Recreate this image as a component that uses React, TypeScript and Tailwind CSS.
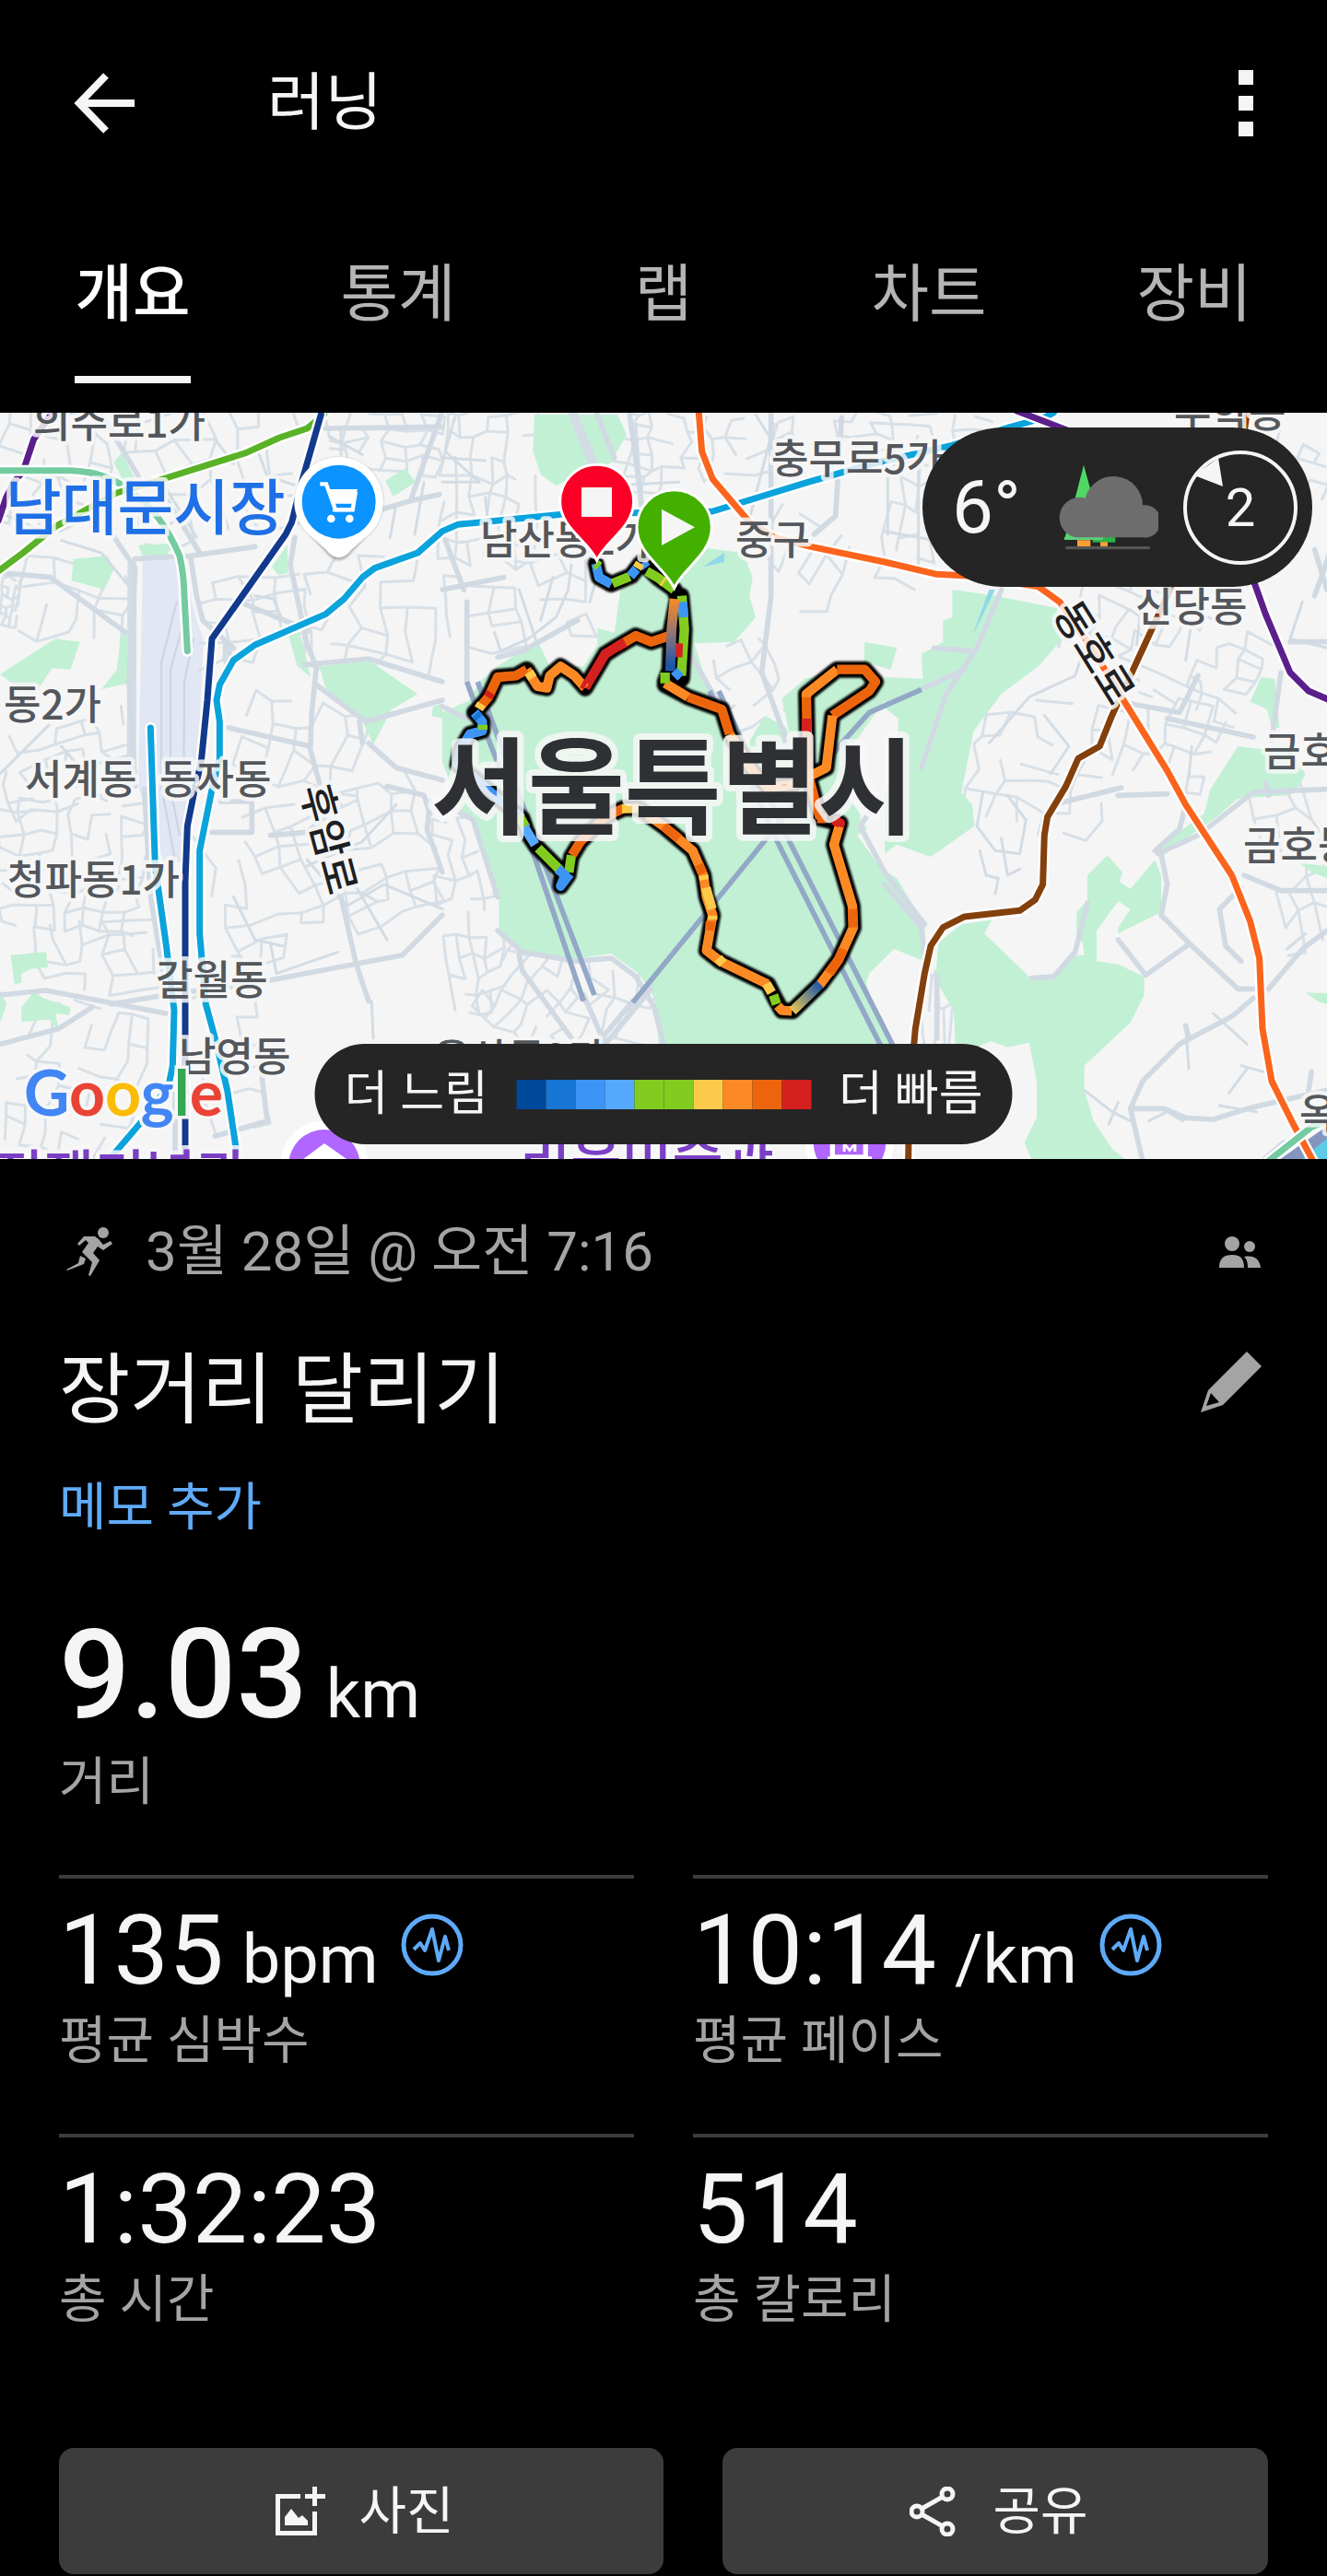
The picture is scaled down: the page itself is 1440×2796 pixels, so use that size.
import React from "react";

const KR = "font-[Roboto,'Noto_Sans_CJK_KR',sans-serif]";

/* ---------- street map data (units are thirds of a pixel) ---------- */

type Cluster = { x: number; y: number; w: number; h: number; rot: number; nx: number; ny: number; seed: number };

const clusters: Cluster[] = [
  { x: 0, y: 20, w: 420, h: 380, rot: 8, nx: 6, ny: 5, seed: 3 },
  { x: 430, y: 20, w: 540, h: 400, rot: -12, nx: 6, ny: 5, seed: 4 },
  { x: 1060, y: 30, w: 380, h: 180, rot: 4, nx: 6, ny: 4, seed: 5 },
  { x: 0, y: 560, w: 60, h: 160, rot: 8, nx: 3, ny: 5, seed: 6 },
  { x: 60, y: 520, w: 350, h: 240, rot: 6, nx: 4, ny: 3, seed: 7 },
  { x: 0, y: 1040, w: 420, h: 260, rot: -14, nx: 6, ny: 5, seed: 8 },
  { x: 640, y: 560, w: 360, h: 260, rot: -8, nx: 4, ny: 4, seed: 9 },
  { x: 980, y: 500, w: 440, h: 380, rot: 5, nx: 5, ny: 5, seed: 10 },
  { x: 780, y: 970, w: 400, h: 260, rot: 12, nx: 5, ny: 3, seed: 11 },
  { x: 0, y: 1280, w: 460, h: 420, rot: 3, nx: 8, ny: 7, seed: 12 },
  { x: 120, y: 1680, w: 380, h: 230, rot: -6, nx: 5, ny: 4, seed: 13 },
  { x: 60, y: 1960, w: 380, h: 480, rot: 14, nx: 6, ny: 7, seed: 14 },
  { x: 700, y: 1280, w: 700, h: 460, rot: -18, nx: 9, ny: 7, seed: 15 },
  { x: 660, y: 1820, w: 180, h: 520, rot: -8, nx: 3, ny: 6, seed: 16 },
  { x: 1440, y: 30, w: 300, h: 480, rot: 3, nx: 6, ny: 7, seed: 17 },
  { x: 1990, y: 30, w: 300, h: 260, rot: 5, nx: 5, ny: 6, seed: 18 },
  { x: 2300, y: 50, w: 300, h: 170, rot: -4, nx: 4, ny: 3, seed: 19 },
  { x: 2720, y: 30, w: 500, h: 160, rot: 4, nx: 8, ny: 4, seed: 20 },
  { x: 1440, y: 520, w: 480, h: 260, rot: -7, nx: 6, ny: 4, seed: 21 },
  { x: 2480, y: 390, w: 260, h: 240, rot: 28, nx: 4, ny: 3, seed: 22 },
  { x: 2300, y: 790, w: 240, h: 240, rot: -30, nx: 4, ny: 4, seed: 23 },
  { x: 2880, y: 160, w: 160, h: 420, rot: 6, nx: 3, ny: 5, seed: 24 },
  { x: 3480, y: 630, w: 620, h: 300, rot: 24, nx: 9, ny: 6, seed: 25 },
  { x: 3180, y: 960, w: 420, h: 420, rot: 12, nx: 5, ny: 6, seed: 26 },
  { x: 3660, y: 960, w: 300, h: 280, rot: 18, nx: 5, ny: 4, seed: 27 },
  { x: 4120, y: 1240, w: 200, h: 520, rot: -16, nx: 3, ny: 5, seed: 28 },
  { x: 4000, y: 100, w: 320, h: 200, rot: 22, nx: 5, ny: 4, seed: 29 },
  { x: 1440, y: 1340, w: 180, h: 640, rot: -6, nx: 4, ny: 10, seed: 30 },
  { x: 1580, y: 1780, w: 340, h: 300, rot: 34, nx: 6, ny: 5, seed: 31 },
  { x: 1900, y: 1830, w: 220, h: 250, rot: 14, nx: 3, ny: 3, seed: 32 },
  { x: 3000, y: 1860, w: 100, h: 230, rot: 2, nx: 4, ny: 2, seed: 33 },
];

function streets({ x, y, w, h, nx, ny, rot, seed }: Cluster): string {
  let s = seed * 7919 + 17;
  const rnd = () => {
    s = (s * 1103515245 + 12345) % 2147483648;
    return s / 2147483648;
  };
  const a = (rot * Math.PI) / 180;
  const pts: number[][][] = [];
  for (let j = 0; j <= ny; j++) {
    pts.push([]);
    for (let i = 0; i <= nx; i++) {
      const u = (i / nx - 0.5) * w + (rnd() - 0.5) * (w / nx) * 0.6;
      const v = (j / ny - 0.5) * h + (rnd() - 0.5) * (h / ny) * 0.6;
      pts[j].push([
        Math.round(x + w / 2 + u * Math.cos(a) - v * Math.sin(a)),
        Math.round(y + h / 2 + u * Math.sin(a) + v * Math.cos(a)),
      ]);
    }
  }
  let d = "";
  for (let j = 0; j <= ny; j++) {
    for (let i = 0; i <= nx; i++) {
      const [px, py] = pts[j][i];
      if (i < nx && rnd() < 0.62) d += `M${px} ${py}L${pts[j][i + 1][0]} ${pts[j][i + 1][1]}`;
      if (j < ny && rnd() < 0.62) d += `M${px} ${py}L${pts[j + 1][i][0]} ${pts[j + 1][i][1]}`;
    }
  }
  return d;
}

const parks = [
  "M370 185 395 155 440 240 410 262Z",
  "M240 500 350 490 370 535 340 600 232 570Z",
  "M0 875 180 760 260 770 230 860 170 855 110 945 60 920Z",
  "M395 740H415V905L330 925 380 860Z",
  "M450 455 555 450 545 490H465Z",
  "M885 525 935 455 938 545 905 552Z",
  "M1255 245 1320 205 1352 250 1280 297Z",
  "M940 750 975 738 1012 885 968 850Z",
  "M1040 850 1200 830 1360 940 1275 990 1215 1105 1180 1030 1060 920Z",
  "M1410 980 1440 970V1020L1405 1010Z",
  "M35 1790 150 1780 156 1830 100 1835 70 1850V1880L47 1885Z",
  "M70 1960 110 1910 140 1930 230 1960 225 1985 180 1980 192 2036 160 2000 70 2007Z",
  "M0 1905 22 1950 0 2010Z",
  "M1740 30H2010L2040 95 1985 190 1940 205 1810 262 1760 225 1735 150Z",
  "M1750 765 1790 850 1900 850 1945 780V725L2000 740 2020 600 2150 470 2260 460 2420 480 2450 560 2440 620 2460 690 2390 770 2260 775 2300 900 2360 990 2430 1110 2490 1010 2560 1050 2580 1110 2545 955 2620 890 2760 850 2880 900 2880 960 2760 1130 2750 1260 2800 1330 2850 1360 2790 1400 2870 1510 2920 1540 2980 1640 3010 1690V1810L2910 1770 2830 1850 2820 1880 2850 1980 2910 2110H2145V2080L2130 1930 2080 1850 1990 1785 1850 1805 1690 1770 1625 1710V1590L1545 1370 1500 1320 1440 1160V1000L1530 960 1560 900 1620 850Z",
  "M3100 600 3240 620 3440 660 3455 765 3380 850 3260 940 3170 1060 3130 1260 3165 1300 3172 1370 3030 1470 2920 1430 2880 1460V1260L2920 1180 2925 1020 2880 985V885L3005 890 3000 810 3070 770V700L3100 690Z",
  "M2815 770 2920 790 2900 860 2812 835Z",
  "M4105 885 4150 890 4165 1050H4140L4125 990 4070 965Z",
  "M4030 1110 4110 1120 4190 1100 4250 1200 4230 1240 4190 1270 4030 1280 3960 1340 3780 1470 3760 1445 3920 1330 3940 1250Z",
  "M3605 1465 3655 1520 3645 1550 3680 1575 3760 1480 3780 1530V1650L3640 1720V1700L3680 1640 3640 1615 3570 1710V1810L3640 1820 3725 1860V1920L3680 2010 3530 2150V2230L3560 2330 3620 2420 3670 2460H3360L3335 2400 3375 2320V2200L3350 2075 3280 2090 3225 2070 3180 2090 3110 2080 3105 1970 3045 1870 3055 1750 3130 1690 3230 1675 3205 1720 3350 1860 3430 1855 3480 1790H3530L3525 1750 3505 1730V1650L3540 1610V1530Z",
  "M4250 1912 4320 1915V1950L4290 1940Z",
  "M4230 1490 4320 1500V1540L4270 1520Z",
];

const minor = [
  "M0 350 140 410M200 440 330 480 420 590M540 270 640 430M840 150 870 230 960 260M830 620 890 630 920 700M700 110 760 190",
  "M1070 100 1180 160M1110 80V160M1380 250 1350 420M1290 320 1270 430M0 1200 160 1040M200 1110 260 1180 420 1140",
  "M1480 40 1450 150 1560 250M1580 300 1600 480M2070 60 2090 330M2520 60 2440 370M2460 30 2510 110",
  "M1860 520 1850 600 1810 690 1720 760 1630 800 1610 740M1690 600 1750 780M1800 560 1760 700M1940 570 1920 640",
  "M2000 340 2280 330M2010 260 2210 250M1440 250 1560 250M1440 170 1580 180",
  "M3560 700 3500 880 3350 950 3220 1100M3720 620 3700 780M3880 700 3860 830M3400 1010 3480 1110 3420 1200",
  "M2890 150V420M2990 180V540M2880 410 3100 450M4240 640 4200 760 4320 790M3880 1110 3870 1210",
  "M3200 1260 3180 1370 3240 1450 3320 1460 3340 1350 3280 1270M3260 1410 3280 1530 3320 1510M3190 1450 3210 1530 3250 1540 3240 1590",
  "M3950 1980 4060 2080M3870 2160 3860 2020M4040 2150 4150 2180M4000 2240 4060 2160M4190 1770 4250 1720",
  "M3530 2230 3620 2300 3680 2330M3610 2340 3640 2270M3740 2330 3800 2300 3850 2330M3970 2280 4090 2300",
  "M880 1750 900 1850 1100 1780M760 1600 830 1740 920 1760M1210 1940 1215 2060",
  "M1000 1480 1130 1630 1250 1560 1440 1640M1120 1500 1260 1740M1290 1300 1180 1420 1000 1500",
];

const major = [
  "M0 545 165 560 410 740M345 390 440 530 420 900 440 1240M440 500 620 490 830 460M620 490 640 620 660 700 760 790",
  "M330 30 450 230M520 270 650 480M960 430 945 520 1000 780 1030 850 1015 1000 1010 1120 1040 1230",
  "M745 1050 1010 1110M1030 910 1190 1030 1440 960M1200 1100 1290 1180 1440 1220M1170 1030 1180 1100",
  "M990 845 1200 825 1440 900M1440 20 1340 300M1060 75 1440 70M1430 290 1340 310 1240 340M780 640 1000 730",
  "M470 1250 490 1600 540 1900M0 1920 150 1905 540 1980M360 1950 540 1920 890 1870 1310 1790 1440 1660",
  "M1110 1600 1160 1820 1200 1940M1400 1290 1390 1380 1440 1520M880 1400 1000 1390 1080 1320M1260 1240 1380 1270 1400 1330",
  "M0 2080 190 2030 300 1960M700 2380 870 2330M840 2080 870 2330M570 2180V2440M720 1290H820V1390H690",
  "M1940 20 2000 170M2050 30 2080 250 2090 340M1520 640V900M1450 440 1510 600M1440 600 1640 560",
  "M1620 820 1700 800 1880 700M2510 30V620L2480 870 2570 1120M2740 40 2720 360 2650 420M1440 980 1520 1020",
  "M2240 800 2340 970M1450 1300 1540 1350 1620 1600M1620 1710 1700 1780 1870 1810 1990 1800 2070 1860 2130 1960 2160 2080",
  "M1690 1790 1700 1840 1860 2060M1900 1920 1970 2080 2120 1900M2060 1940 1960 2060M2860 1280 2800 1370 2880 1520 3010 1690",
  "M3260 600 3180 790 3080 940 3000 1180M3010 920 3140 860M3040 790 3170 800M4170 870 4140 1090M4200 770H4320M4340 450 4280 620",
  "M3900 880 3840 1000 3670 970M3800 1020 4080 1080M4280 470 4320 600M2880 1560 3000 1700 3010 1800",
  "M3780 1460 3800 1560 3780 1660 3870 1750 4030 1900H4080M3640 1740 3730 1855 3870 1755M3540 1620 3500 1780 3430 1860 3360 1865",
  "M4040 1570 3970 1640 3990 1760 4040 1810M4320 1580 4170 1580 4050 1530M4320 1710 4240 1770 4130 1900",
  "M4080 1930 4010 1990 3840 2080 3720 2200 3680 2290 3720 2460M3680 2290H3790L3860 2320 3950 2325 4060 2290 4320 2230",
  "M4180 2400 4120 2450M3770 1460 3900 1400 4080 1260 4320 1250M3860 1300 3840 1380 3760 1450M3640 1270 3800 1265M3050 1860V2060",
  "M3860 2020 3870 2060M4260 2230 4270 2170M4130 1270 4120 1230M3430 1300 3650 1245",
];

const tunnels = [
  "M1520 900 1560 1010 1740 1470 1900 1940M1555 900 1760 1460 1935 1920",
  "M2310 930 2530 1420 2870 2090M2340 930 2570 1420 2910 2090",
  "M2060 1945 2500 1405 2740 1100 2830 1000 3000 925",
];

const transit: [string, string][] = [
  ["#5b1f8c", "M170 24 110 110 75 215 45 250 20 300-5 375"],
  ["#74cba0", "M-5 212H230Q340 215 420 275 520 340 585 490 600 560 600 620L610 800"],
  ["#5ab227", "M1055 30 1000 75 910 105 800 155 530 240 380 285 180 395 75 480-5 540"],
  ["#123a8c", "M1045 30 985 240 950 380 930 420 690 760 675 960 655 1160 630 1270 610 1370 603 1550V2460"],
  ["#0ba3dc", "M490 1050 505 1500 540 1750 567 1970 562 2150 550 2210 480 2310 360 2450"],
  [
    "#0ba3dc",
    "M770 2430 740 2230 700 2060 670 1950 650 1720V1450L690 1250 715 1150V1030L705 960 715 910 760 830 830 780 1060 680 1120 630 1180 560 1220 530 1360 480 1440 410 1490 388 1830 355 2320 345 2630 250 2840 190 3100 130 3290 70 3400 40 3430 24",
  ],
  ["#5b1f8c", "M3310 18 3420 60 3600 130"],
  [
    "#84400c",
    "M4060 24 4050 90 3800 620 3740 750 3620 1010 3580 1110 3510 1150 3470 1240 3410 1340 3400 1400 3395 1560 3370 1610 3320 1645 3140 1665 3070 1700 3030 1760 3010 1850 2980 2030 2960 2250 2957 2460",
  ],
  [
    "#fb641c",
    "M2275 24 2285 150 2320 240 2440 380 2520 430 2640 460 2880 510 3050 550 3150 555 3380 590 3450 640 3560 800 3670 980 3800 1190 3860 1300 4010 1530 4070 1680 4100 1800 4110 2030 4140 2200 4210 2340 4280 2470",
  ],
  ["#5b1f8c", "M4070 540 4120 680 4200 870 4260 930 4330 960"],
  ["#74cba0", "M4130 2460 4270 2350 4330 2325"],
];

const routeShape =
  "M1940 515 1950 560 1990 582 2055 555 2085 515M2090 510 2140 560 2195 600 2210 640M2205 630 2185 730 2180 860 2165 900M2218 620 2228 730 2220 890M2180 750 2120 770 2070 750 2010 785 1970 810 1905 920 1870 880 1825 850 1790 880 1780 920 1750 915 1715 860 1680 880 1620 885 1590 950 1560 985 1545 1000 1570 1030 1570 1060 1530 1070 1500 1120 1490 1170 1540 1210 1610 1270 1700 1345 1715 1390 1745 1435 1830 1520 1825 1565 1850 1530 1860 1470 1890 1420 1970 1340 2030 1312 2080 1312 2160 1370 2255 1450 2290 1530 2300 1600 2320 1660 2300 1775 2345 1810 2500 1885 2525 1935 2545 1970 2580 1972 2670 1885 2730 1805 2778 1700 2775 1630 2715 1430 2735 1360 2670 1345 2630 1200 2625 940 2725 860 2815 860 2850 900 2830 930 2710 1010 2690 1180 2580 1235 2500 1245 2450 1190 2375 1070 2350 990 2240 950 2165 910";

const route: [string, string][] = [
  ["#ec650d", "M2180 750 2120 770 2070 750 2010 785"],
  ["#d4201f", "M2035 772 2010 785 1970 810 1905 920"],
  ["#fb8a25", "M1905 920 1870 880 1825 850 1790 880 1780 920 1750 915 1715 860"],
  ["#ec650d", "M1715 860 1680 880 1620 885 1590 950 1560 985"],
  ["#fcca4b", "M1722 868 1734 888M1568 972 1558 988"],
  ["#d4201f", "M1598 935 1588 950M1908 912 1895 905"],
  ["#3c95f5", "M1545 1000 1570 1030 1570 1060 1530 1070 1500 1120 1490 1170 1540 1210 1610 1270 1700 1345"],
  ["#1776d3", "M1510 1095 1500 1120 1490 1160M1548 1006 1560 1018"],
  ["#82cc20", "M1572 1040V1056M1690 1335 1712 1375"],
  ["#55a8fd", "M1707 1372 1720 1395 1742 1430"],
  ["#82cc20", "M1752 1442 1825 1515M1852 1520 1860 1465"],
  ["#3c95f5", "M1815 1510 1840 1530 1825 1565 1855 1525"],
  ["#ec650d", "M1862 1465 1890 1420 1970 1340 2030 1312"],
  ["#fcca4b", "M2025 1313 2080 1312"],
  ["#82cc20", "M2080 1312 2095 1322"],
  ["#fb8a25", "M2110 1335 2160 1370 2255 1450 2290 1530 2300 1600 2320 1660 2300 1775 2345 1810 2500 1885"],
  ["#ec650d", "M2160 1370 2210 1410M2275 1495 2288 1525M2313 1680 2310 1710"],
  ["#fcca4b", "M2290 1530 2292 1545M2298 1570 2318 1640M2320 1662V1675M2338 1800 2354 1818M2495 1883 2512 1912"],
  ["#82cc20", "M2518 1920 2528 1950"],
  ["#fb8a25", "M2532 1955 2545 1970 2578 1972"],
  ["#fb8a25", "M2668 1888 2730 1805 2778 1700 2775 1630 2715 1430 2735 1360"],
  ["#ec650d", "M2700 1850 2730 1805 2745 1770M2778 1700 2775 1640M2690 1345 2660 1345"],
  ["#d4201f", "M2732 1372 2735 1360 2712 1350"],
  ["#ec650d", "M2670 1345 2630 1200 2625 940"],
  ["#d4201f", "M2625 1020V1065"],
  ["#fb8a25", "M2625 950V940L2725 860"],
  ["#ec650d", "M2725 860 2815 860 2850 900 2830 930 2710 1010"],
  ["#fb8a25", "M2710 1010 2690 1180 2580 1235 2500 1245 2450 1190 2375 1070"],
  ["#ec650d", "M2375 1070 2350 990 2240 950"],
  ["#fb8a25", "M2240 950 2165 905"],
  ["#82cc20", "M2220 620 2228 730 2218 880M2165 870V905"],
  ["#3c95f5", "M2222 640 2226 690M2215 865 2195 885"],
  ["#d4201f", "M2208 775 2206 820"],
  ["#3c95f5", "M1940 515 1950 560 1990 582"],
  ["#82cc20", "M1940 515 1950 525M1994 580 2050 557M2105 540 2140 560 2195 600"],
  ["#3c95f5", "M2052 556 2072 532M2092 512 2104 528"],
  ["#fcca4b", "M2074 530 2084 514M2155 572 2162 577"],
];

type Label = { t: string; x: number; y: number; s?: string; c?: string; rot?: number };

const labels: Label[] = [
  { t: "의주로1가", x: 36, y: 27 },
  { t: "남대문시장", x: 6, y: 127, s: "text-[66px]", c: "fill-[#1f6fe6]" },
  { t: "동2가", x: 4, y: 333 },
  { t: "서계동", x: 27, y: 414 },
  { t: "동자동", x: 173, y: 414 },
  { t: "청파동1가", x: 8, y: 523 },
  { t: "갈월동", x: 169, y: 632 },
  { t: "남영동", x: 194, y: 715 },
  { t: "충무로5가", x: 837, y: 66 },
  { t: "남산동2가", x: 521, y: 154 },
  { t: "중구", x: 798, y: 154 },
  { t: "무학동", x: 1274, y: 16 },
  { t: "신당동", x: 1232, y: 227 },
  { t: "금호동", x: 1371, y: 384 },
  { t: "금호동", x: 1349, y: 486 },
  { t: "옥수동", x: 1410, y: 777 },
  { t: "용산동2가", x: 470, y: 717 },
  { t: "전쟁기념관", x: -8, y: 850, s: "text-[60px]", c: "fill-[#7a3fc4]" },
  { t: "리움미술관", x: 564, y: 834, s: "text-[60px]", c: "fill-[#7a3fc4]" },
  { t: "후암로", x: 326, y: 408, c: "fill-[#1d1f22]", rot: 75 },
  { t: "동호로", x: 1142, y: 217, c: "fill-[#1d1f22]", rot: 58 },
];

function MapDrawing() {
  return (
    <svg viewBox="0 0 1440 810" className="block w-full" role="img" aria-label="서울특별시 러닝 경로 지도">
      <defs>
        <linearGradient id="climb" x1="0" y1="630" x2="0" y2="870" gradientUnits="userSpaceOnUse">
          <stop offset="0" stopColor="#fb8a25" />
          <stop offset="0.5" stopColor="#8a7378" />
          <stop offset="0.9" stopColor="#1c57a8" />
        </linearGradient>
        <linearGradient id="turn" x1="2580" y1="1972" x2="2670" y2="1885" gradientUnits="userSpaceOnUse">
          <stop offset="0" stopColor="#e8c555" />
          <stop offset="1" stopColor="#1c57a8" />
        </linearGradient>
        <filter id="soft" x="-20%" y="-20%" width="140%" height="140%">
          <feGaussianBlur stdDeviation="3" />
        </filter>
      </defs>
      <rect width="1440" height="810" fill="#f5f5f5" />
      <g transform="translate(0 -8) scale(0.33333)" fill="none" strokeLinejoin="round" strokeLinecap="round">
        <path d="M465 505 590 505 640 700 662 760 640 1260 590 1490 530 1480 450 1240Z" fill="#e1e7f3" />
        <g stroke="#d8e0e7" strokeWidth="9">
          {clusters.map((c) => (
            <path key={c.seed} d={streets(c)} />
          ))}
        </g>
        <path
          d="M575 640 525 840V1240L570 1480M600 700 555 860V1250L585 1400M630 760 600 900 598 1240"
          stroke="#cfd5e3"
          strokeWidth="7"
        />
        <g fill="#c2f0d5">
          {parks.map((d) => (
            <path key={d} d={d} />
          ))}
        </g>
        <path d="M2290 525 2358 480V510Z M3240 600 3166 750 3220 600Z" fill="#90d8e8" />
        <path d="M2810 1200 2880 1010 2915 1020 2905 1170 2850 1270 2870 1360 2850 1410 2800 1350Z" fill="#f5f5f5" />
        <g stroke="#d3dce4" strokeWidth="9">
          {minor.map((d) => (
            <path key={d} d={d} />
          ))}
        </g>
        <path d="M1865 24 1930 190M430 520 428 1230M740 830V780" stroke="#d3dce4" strokeWidth="30" />
        <g stroke="#d1dae3" strokeWidth="17">
          {major.map((d) => (
            <path key={d} d={d} />
          ))}
        </g>
        <g stroke="#93a8c6" strokeWidth="17" strokeLinecap="butt">
          {tunnels.map((d) => (
            <path key={d} d={d} />
          ))}
        </g>
        <path d="M4160 2460 4330 2340V2460Z" fill="#8496bf" />
        <path d="M4230 2460 4330 2380V2460Z" fill="#5ccbe8" />
        {transit.map(([c, d]) => (
          <g key={d}>
            <path d={d} stroke="#fff" strokeWidth="36" />
            <path d={d} stroke={c} strokeWidth="21" />
          </g>
        ))}
        <path d={routeShape} stroke="#000" strokeWidth="54" filter="url(#soft)" />
        {route.map(([c, d]) => (
          <path key={d} d={d} stroke={c} strokeWidth="31" strokeLinecap="butt" />
        ))}
        <path d="M2196 630 2186 730 2182 865" stroke="url(#climb)" strokeWidth="32" strokeLinecap="butt" />
        <path d="M2580 1972 2670 1885" stroke="url(#turn)" strokeWidth="31" strokeLinecap="butt" />
      </g>

      <g
        className="font-['Noto_Sans_CJK_KR',sans-serif] font-medium [paint-order:stroke]"
        stroke="#f7f7f7"
        strokeOpacity="0.85"
        strokeLinejoin="round"
      >
        {labels.map((l) => (
          <text
            key={`${l.t}${l.y}`}
            x={l.x}
            y={l.y}
            strokeWidth="9"
            transform={l.rot ? `rotate(${l.rot} ${l.x} ${l.y})` : undefined}
            className={`${l.s ?? "text-[44px]"} ${l.c ?? "fill-[#54575b]"}`}
          >
            {l.t}
          </text>
        ))}
        <text x="468" y="448" strokeWidth="14" className="fill-[#2e3034] text-[114px] font-bold">
          서울특별시
        </text>
      </g>
      <text
        x="26"
        y="763"
        className="font-[Lato,sans-serif] text-[68px] font-bold [paint-order:stroke]"
        stroke="#f7f7f7"
        strokeWidth="7"
      >
        <tspan fill="#4285f4">G</tspan>
        <tspan fill="#ea4335">o</tspan>
        <tspan fill="#fbbc05">o</tspan>
        <tspan fill="#4285f4">g</tspan>
        <tspan fill="#34a853">l</tspan>
        <tspan fill="#ea4335">e</tspan>
      </text>

      <g transform="translate(0 -8) scale(0.33333)">
        <path
          d="M1103 495C1085 495 1072 482 1060 468L1010 415A145 145 0 1 1 1196 415L1146 468C1134 482 1121 495 1103 495Z"
          fill="#777"
          opacity="0.5"
          filter="url(#soft)"
          transform="translate(0 10)"
        />
        <path
          d="M1103 495C1085 495 1072 482 1060 468L1005 420A145 145 0 1 1 1201 420L1146 468C1134 482 1121 495 1103 495Z"
          fill="#fff"
        />
        <circle cx="1103" cy="314" r="120" fill="#0b93ff" />
        <path d="M1042 256H1062L1092 340H1148L1158 280" stroke="#fff" strokeWidth="13" fill="none" />
        <path d="M1068 273H1164L1148 320H1086ZM1086 333H1142V346H1082Z" fill="#fff" />
        <circle cx="1078" cy="369" r="13" fill="#fff" />
        <circle cx="1138" cy="369" r="13" fill="#fff" />

        <g stroke="#fff" strokeWidth="9">
          <path d="M1943 505C1915 440 1823 400 1823 313A120 120 0 1 1 2063 313C2063 400 1971 440 1943 505Z" fill="#fb0027" />
          <path d="M2195 595C2167 530 2073 485 2073 397A121 121 0 1 1 2317 397C2317 485 2223 530 2195 595Z" fill="#43b000" />
        </g>
        <path d="M1893 267H1992V363H1893ZM2154 338 2262 397 2154 456Z" fill="#f5f5f5" />

        <circle cx="1056" cy="2474" r="144" fill="#fff" />
        <circle cx="1056" cy="2474" r="116" fill="#b066ff" />
        <path d="M982 2458 1056 2403 1134 2458Z" fill="#fff" />
        <circle cx="2766" cy="2400" r="144" fill="#fff" />
        <circle cx="2766" cy="2400" r="118" fill="#b066ff" />
        <path d="M2702 2400H2826V2446H2838V2460H2694V2446H2702Z" fill="#fff" />
        <path
          d="M2718 2394H2810V2440H2718ZM2744 2430V2404H2754L2766 2420 2778 2404H2788V2430H2779V2416L2766 2432 2753 2416V2430Z"
          fill="#b066ff"
          fillRule="evenodd"
        />
      </g>
    </svg>
  );
}

const paceColors = [
  "bg-[#004899]",
  "bg-[#1776d3]",
  "bg-[#3c95f5]",
  "bg-[#55a8fd]",
  "bg-[#82cc20]",
  "bg-[#82cc20]",
  "bg-[#fcca4b]",
  "bg-[#fb8a25]",
  "bg-[#ec650d]",
  "bg-[#d4201f]",
];

function WeatherIcon() {
  return (
    <svg width="112" height="94" viewBox="0 0 336 282" aria-hidden="true">
      <path d="M93 2 160 246H30Z" fill="#4fd866" />
      <path d="M122 237H196V254H122Z" fill="#2bb34a" />
      <path d="M30 237H155V246H30Z" fill="#5fd07a" />
      <path d="M72 247H115V267H72ZM147 253H171V267H147Z" fill="#fba035" />
      <path
        d="M66 238A66 66 0 1 1 98 110A95 95 0 0 1 285 133A53 53 0 1 1 283 238Z"
        fill="#6d6d6d"
      />
      <path d="M38 272H304" stroke="#565656" strokeWidth="10" strokeLinecap="round" />
    </svg>
  );
}

function PulseIcon() {
  return (
    <svg width="68" height="68" viewBox="0 0 68 68" fill="none" stroke="#5eaaf8" aria-hidden="true">
      <circle cx="34" cy="34" r="31" strokeWidth="5" />
      <path d="M14 39 21 32 26 40 34 17 41 51 48 25 52 40" strokeWidth="4" strokeLinejoin="round" />
    </svg>
  );
}

function Stat({ value, unit, label, pulse }: { value: string; unit?: string; label: string; pulse?: boolean }) {
  return (
    <div className="h-[281px] border-t-4 border-[#3c3c3c] pt-5">
      <dd className="flex h-[112px] text-[#f5f5f5]">
        <span className="text-[106px] leading-[116px]">{value}</span>
        {unit && <span className="ml-5 text-[74px] leading-[136px]">{unit}</span>}
        {pulse && (
          <span className="mt-4.5 ml-6">
            <PulseIcon />
          </span>
        )}
      </dd>
      <dt className="text-[56px] leading-[88px] text-[#a4a4a4]">{label}</dt>
    </div>
  );
}

const tabs = ["개요", "통계", "랩", "차트", "장비"];

export default function App() {
  return (
    <main className={`min-h-screen bg-black text-[#f5f5f5] ${KR}`}>
      <header className="flex h-56 items-center px-20">
        <button aria-label="뒤로">
          <svg width="66" height="66" viewBox="0 0 66 66" fill="none" stroke="#f5f5f5" strokeWidth="8" aria-hidden="true">
            <path d="M66 33H7M35 3 6 33 35 63" />
          </svg>
        </button>
        <h1 className="ml-36 text-[68px] leading-[80px]">러닝</h1>
        <button aria-label="더보기" className="ml-auto grid gap-3">
          <i className="size-4 bg-[#f5f5f5]" />
          <i className="size-4 bg-[#f5f5f5]" />
          <i className="size-4 bg-[#f5f5f5]" />
        </button>
      </header>

      <nav className="grid h-56 grid-cols-5 items-end justify-items-center pb-8">
        {tabs.map((t, i) => (
          <button
            key={t}
            aria-current={i === 0 ? "page" : undefined}
            className={
              i === 0
                ? "border-b-8 border-[#f5f5f5] pb-12 text-[68px] leading-[80px] font-medium text-white"
                : "border-b-8 border-transparent pb-12 text-[68px] leading-[80px] text-[#b5b5b5]"
            }
          >
            {t}
          </button>
        ))}
      </nav>

      <section className="relative overflow-hidden">
        <MapDrawing />
        <div className="absolute top-4 right-4 flex h-[173px] w-[423px] items-center justify-between rounded-full bg-[#252525] pr-4 pl-8">
          <span className="w-[84px] text-[80px] leading-[96px]">6°</span>
          <WeatherIcon />
          <div className="relative grid size-[124px] place-items-center rounded-full border-4 border-[#f5f5f5] text-[58px] leading-[64px]">
            2
            <svg className="absolute -top-1 -left-1" width="124" height="124" viewBox="0 0 124 124" aria-hidden="true">
              <path d="M12 27 38 8 43 39Z" fill="#f5f5f5" />
            </svg>
          </div>
        </div>
        <div className="absolute bottom-4 left-1/2 flex h-[109px] w-[757px] -translate-x-1/2 items-center justify-between rounded-full bg-[#252525] px-8 text-[52px] leading-[72px]">
          <span>더 느림</span>
          <div className="flex h-8 w-80">
            {paceColors.map((c, i) => (
              <i key={i} className={`flex-1 ${c}`} />
            ))}
          </div>
          <span>더 빠름</span>
        </div>
      </section>

      <section className="px-16">
        <div className="flex h-[202px] items-center px-2 text-[#a4a4a4]">
          <svg width="54" height="54" viewBox="0 0 54 54" fill="#a4a4a4" aria-hidden="true">
            <circle cx="40" cy="6" r="6" />
            <path d="M12 18 19 10 31 10 35 13 40 19 48 15 50 18 40 25 34 21 29 28 36 36 26 53 24 52 28 38 17 27 24 17 21 14 14 20ZM15 31 21 34 19 40 1 47 0 46 13 39Z" />
          </svg>
          <time className="ml-8 text-[60px] leading-[72px]">3월 28일 @ 오전 7:16</time>
          <svg className="ml-auto" width="46" height="35" viewBox="0 0 46 35" fill="#a4a4a4" aria-label="공개">
            <circle cx="15" cy="8" r="8" />
            <circle cx="34" cy="11" r="6" />
            <path d="M1 34C1 24 6 20 15 20S28 24 28 34ZM32 34C32 28 31 25 28 22 38 20 45 24 46 34Z" />
          </svg>
        </div>

        <div className="flex h-[116px] items-start pr-1.5">
          <h2 className="text-[84px] leading-[100px]">장거리 달리기</h2>
          <button aria-label="제목 편집" className="mt-1.5 ml-auto">
            <svg width="68" height="68" viewBox="0 0 68 68" fill="#a4a4a4" aria-hidden="true">
              <path fillRule="evenodd" d="M51 1 67 17 25 59 1 67 9 43ZM12 46 7 60 21 56Z" />
            </svg>
          </button>
        </div>
        <a href="#memo" className="mt-4 block w-fit text-[56px] leading-[88px] text-[#60abf8]">
          메모 추가
        </a>

        <dl>
          <div className="h-[355px] pt-[58px]">
            <dd className="flex h-[144px] items-baseline">
              <span className="text-[136px] leading-[160px] font-medium">9.03</span>
              <span className="ml-5 text-[74px] leading-[96px]">km</span>
            </dd>
            <dt className="mt-2 text-[56px] leading-[88px] text-[#a4a4a4]">거리</dt>
          </div>
          <div className="grid grid-cols-2 gap-x-16">
            <Stat value="135" unit="bpm" label="평균 심박수" pulse />
            <Stat value="10:14" unit="/km" label="평균 페이스" pulse />
            <Stat value="1:32:23" label="총 시간" />
            <Stat value="514" label="총 칼로리" />
          </div>
        </dl>

        <div className="mt-15 grid grid-cols-[656fr_592fr] gap-16 pb-0.5 text-[56px] leading-[80px]">
          <button className="flex h-[137px] items-center justify-center gap-9 rounded-2xl bg-[#3c3c3c] pl-2">
            <svg width="54" height="54" viewBox="0 0 54 54" fill="#f5f5f5" aria-hidden="true">
              <path d="M0 8H27V13H5V48H40V27H45V53H0ZM40 0H45V8H54V13H45V21H40V13H32V8H40ZM10 42V33L17 24 25 34 29 31 35 37V42Z" />
            </svg>
            사진
          </button>
          <button className="flex h-[137px] items-center justify-center gap-10 rounded-2xl bg-[#3c3c3c] pl-2">
            <svg width="50" height="54" viewBox="0 0 50 54" fill="none" stroke="#f5f5f5" strokeWidth="5" aria-hidden="true">
              <circle cx="41" cy="8" r="6" />
              <circle cx="8" cy="27" r="6" />
              <circle cx="41" cy="46" r="6" />
              <path d="M13 24 36 11M13 30 36 43" />
            </svg>
            공유
          </button>
        </div>
      </section>
    </main>
  );
}
